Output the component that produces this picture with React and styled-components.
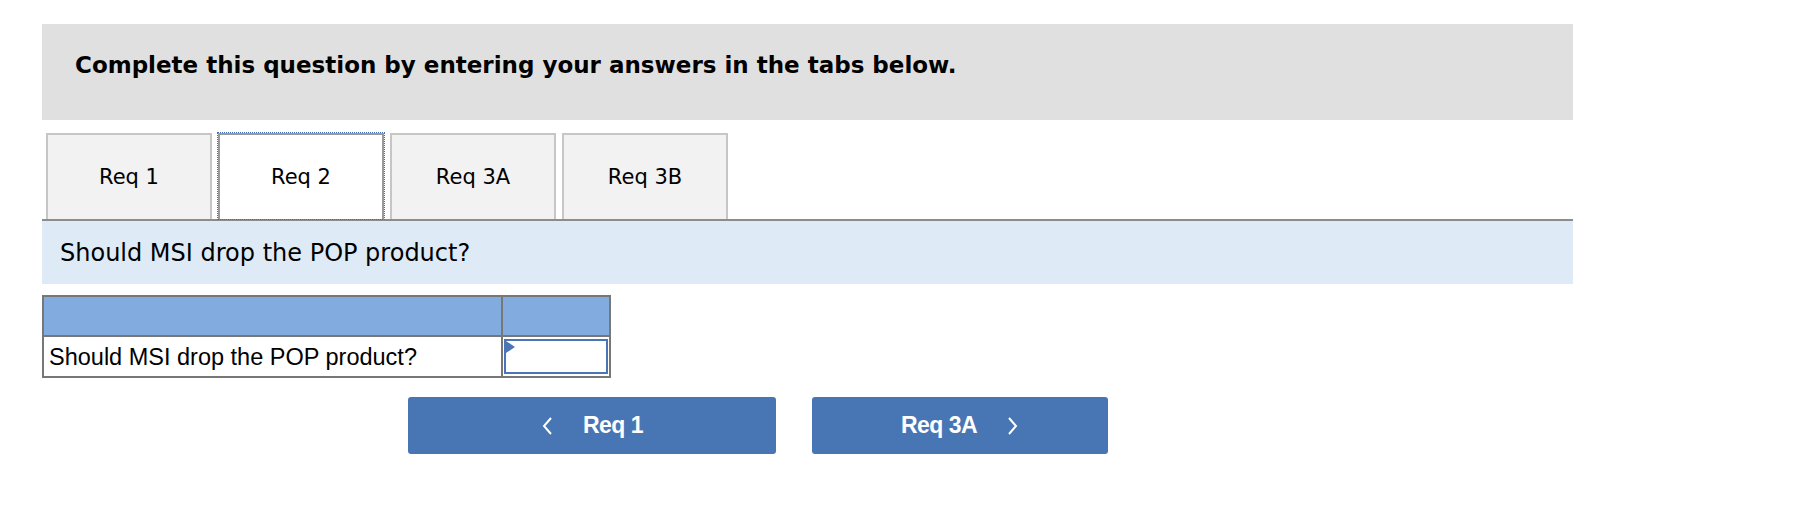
import React from "react";
import styled, { createGlobalStyle } from "styled-components";

const GlobalStyle = createGlobalStyle`
  html, body {
    margin: 0;
    padding: 0;
    background: #fff;
  }
`;

const Page = styled.div`
  width: 1531px;
  padding: 24px 0 0 42px;
  font-family: "DejaVu Sans", Verdana, sans-serif;
  color: #000;
`;

const Instructions = styled.div`
  height: 96px;
  box-sizing: border-box;
  background: #e0e0e0;
  padding: 25px 0 0 33px;
  font-weight: bold;
  font-size: 23px;
  line-height: 32px;
`;

const TabStrip = styled.div`
  display: flex;
  gap: 6px;
  margin-top: 13px;
  padding-left: 4px;
  border-bottom: 2px solid #8c8c8c;
`;

const Tab = styled.div`
  width: 166px;
  height: 86px;
  box-sizing: border-box;
  display: flex;
  align-items: center;
  justify-content: center;
  font-size: 21px;
  background: ${(p) => (p.$active ? "#fff" : "#f2f2f2")};
  border: 2px solid ${(p) => (p.$active ? "#9a9a9a" : "#c6c6c6")};
  border-bottom: none;
  outline: ${(p) => (p.$active ? "1px dotted #3f6fb5" : "none")};
`;

const Band = styled.div`
  height: 63px;
  background: #deebf7;
  display: flex;
  align-items: center;
  padding-left: 18px;
  font-size: 24px;
`;

const Grid = styled.table`
  margin-top: 11px;
  border-collapse: collapse;
  font-family: "Liberation Sans", Arial, sans-serif;
  font-size: 23.5px;
`;

const HeadCell = styled.td`
  background: #82abdf;
  border: 2px solid #777;
  height: 38px;
  padding: 0;
  width: ${(p) => p.$w}px;
`;

const Cell = styled.td`
  border: 2px solid #777;
  height: 37px;
  padding: 2px 0 0 5px;
  background: #fff;
`;

const InputCell = styled.td`
  border: 2px solid #777;
  padding: 1px;
  height: 37px;
`;

const AnswerBox = styled.div`
  position: relative;
  height: 35px;
  box-sizing: border-box;
  border: 2px solid #4a76b6;
  background: #fff;
`;

const Flag = styled.span`
  position: absolute;
  left: 0;
  top: 0;
  width: 0;
  height: 0;
  border-top: 6px solid transparent;
  border-bottom: 6px solid transparent;
  border-left: 9px solid #4a76b6;
`;

const NavRow = styled.div`
  display: flex;
  gap: 36px;
  margin-top: 19px;
  padding-left: 366px;
`;

const NavButton = styled.button`
  width: ${(p) => p.$w}px;
  height: 57px;
  border: none;
  border-radius: 3px;
  background: #4876b4;
  color: #fff;
  font-family: "Liberation Sans", Arial, sans-serif;
  font-weight: bold;
  font-size: 23px;
  letter-spacing: -0.5px;
  display: flex;
  align-items: center;
  justify-content: center;
  gap: 30px;
  padding: 0;
  cursor: pointer;
`;

const Chevron = ({ dir }) => (
  <svg width="12" height="20" viewBox="0 0 12 20" fill="none">
    <path
      d={dir === "left" ? "M10 2 L3 10 L10 18" : "M2 2 L9 10 L2 18"}
      stroke="#fff"
      strokeWidth="2"
    />
  </svg>
);

const tabs = ["Req 1", "Req 2", "Req 3A", "Req 3B"];

export default function App() {
  return (
    <>
      <GlobalStyle />
      <Page>
        <Instructions>
          Complete this question by entering your answers in the tabs below.
        </Instructions>
        <TabStrip>
          {tabs.map((t) => (
            <Tab key={t} $active={t === "Req 2"}>
              {t}
            </Tab>
          ))}
        </TabStrip>
        <Band>Should MSI drop the POP product?</Band>
        <Grid>
          <tbody>
            <tr>
              <HeadCell $w={457} />
              <HeadCell $w={106} />
            </tr>
            <tr>
              <Cell>Should MSI drop the POP product?</Cell>
              <InputCell>
                <AnswerBox>
                  <Flag />
                </AnswerBox>
              </InputCell>
            </tr>
          </tbody>
        </Grid>
        <NavRow>
          <NavButton $w={368}>
            <Chevron dir="left" />
            <span>Req 1</span>
          </NavButton>
          <NavButton $w={296}>
            <span>Req 3A</span>
            <Chevron dir="right" />
          </NavButton>
        </NavRow>
      </Page>
    </>
  );
}
